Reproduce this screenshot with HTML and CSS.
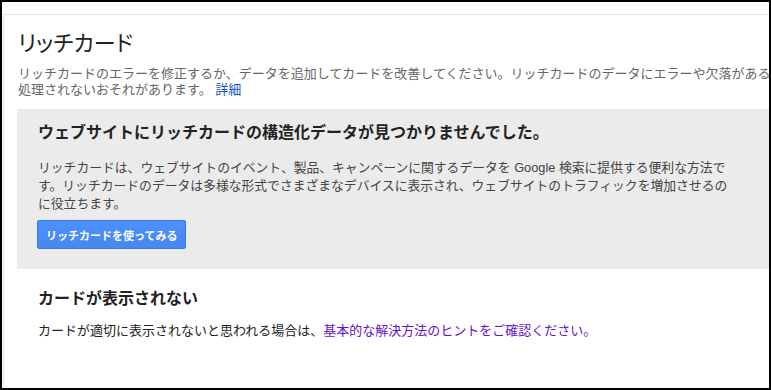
FILE: index.html
```html
<!DOCTYPE html>
<html lang="ja">
<head>
<meta charset="utf-8">
<title>リッチカード</title>
<link rel="stylesheet" href="styles.css">
</head>
<body>
<div class="frame">
  <div class="panel">
    <h1 class="title">リッチカード</h1>
    <p class="desc">リッチカードのエラーを修正するか、データを追加してカードを改善してください。リッチカードのデータにエラーや欠落がある<br>処理されないおそれがあります。 <a class="link" href="#">詳細</a></p>
    <section class="notice">
      <h2 class="notice-title">ウェブサイトにリッチカードの構造化データが見つかりませんでした。</h2>
      <p class="notice-text">リッチカードは、ウェブサイトのイベント、製品、キャンペーンに関するデータを Google 検索に提供する便利な方法です。リッチカードのデータは多様な形式でさまざまなデバイスに表示され、ウェブサイトのトラフィックを増加させるのに役立ちます。</p>
      <button class="btn" type="button">リッチカードを使ってみる</button>
    </section>
    <section class="help">
      <h2 class="help-title">カードが表示されない</h2>
      <p class="help-text">カードが適切に表示されないと思われる場合は、<a class="link-visited" href="#">基本的な解決方法のヒントをご確認ください。</a></p>
    </section>
  </div>
</div>
</body>
</html>
```
FILE: styles.css
```css
html, body {
  margin: 0;
  padding: 0;
  background: #fff;
}
body {
  font-family: "Liberation Sans", "Noto Sans CJK JP", sans-serif;
  color: #222;
}
.frame {
  box-sizing: border-box;
  width: 771px;
  height: 390px;
  border: 2px solid #000;
  overflow: hidden;
  background: #fff;
}
.panel {
  margin-top: 12px;
  margin-left: 1px;
  width: 1000px;
  height: 400px;
  border-top: 1px solid #e5e5e5;
  border-left: 1px solid #e5e5e5;
  padding-left: 13px;
  padding-top: 14px;
  box-sizing: border-box;
}
.title {
  margin: 0;
  padding-left: 1px;
  font-size: 22px;
  line-height: 30px;
  font-weight: 400;
  color: #222;
  font-feature-settings: "palt";
}
.desc {
  margin: 7px 0 0;
  padding-left: 1px;
  font-size: 13px;
  line-height: 16px;
  color: #666;
  white-space: nowrap;
}
.link {
  color: #15c;
  text-decoration: none;
}
.link-visited {
  color: #61c;
  text-decoration: none;
}
.notice {
  margin-top: 11px;
  width: 760px;
  box-sizing: border-box;
  background: #ebebeb;
  padding: 14px 20px 20px 21px;
}
.notice-title {
  margin: 0;
  font-size: 16px;
  line-height: 20px;
  font-weight: 700;
  color: #222;
}
.notice-text {
  margin: 16px 0 0;
  max-width: 693px;
  font-size: 12.8px;
  line-height: 18px;
  color: #444;
}
.btn {
  margin: 7px 0 0 -1px;
  display: block;
  height: 29px;
  padding: 0 8px;
  border: 1px solid #3079ed;
  border-radius: 2px;
  background: linear-gradient(#4d90fe, #4787ed);
  color: #fff;
  font-family: "Liberation Sans", "Noto Sans CJK JP", sans-serif;
  font-size: 11px;
  font-weight: 700;
  cursor: pointer;
}
.help {
  padding-left: 21px;
  padding-top: 20px;
}
.help-title {
  margin: 0;
  font-size: 16px;
  line-height: 20px;
  font-weight: 700;
  color: #222;
}
.help-text {
  margin: 13px 0 0;
  font-size: 13px;
  line-height: 18px;
  color: #222;
}
```
